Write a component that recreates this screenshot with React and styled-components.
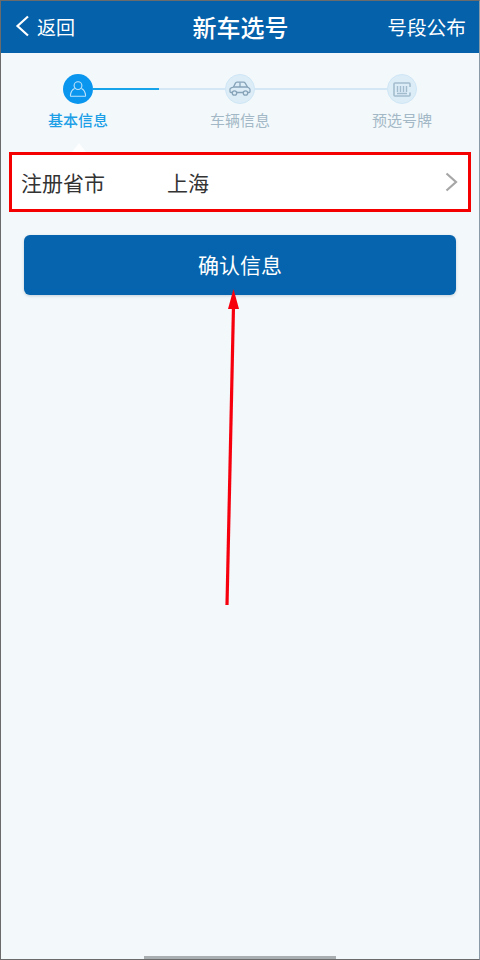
import React from "react";
import styled, { createGlobalStyle } from "styled-components";

const GlobalStyle = createGlobalStyle`
    html, body {
        margin: 0;
        padding: 0;
        background: #f3f8fb;
        font-family: "Noto Sans CJK SC", "Noto Sans", sans-serif;
    }
`;

const Screen = styled.div`
    position: relative;
    box-sizing: border-box;
    width: 480px;
    height: 960px;
    overflow: hidden;
    background: #f3f8fb;
    border-top: 1px solid #6b6b6b;
    border-left: 1px solid #6b6b6b;
    border-bottom: 1px solid #6b6b6b;
    border-right: 1px solid #8a9aa6;
`;

const Header = styled.header`
    display: flex;
    align-items: center;
    justify-content: space-between;
    height: 52px;
    padding: 0 13px 2px 14px;
    box-sizing: border-box;
    background: #0561aa;
    color: #fff;
`;

const Back = styled.div`
    display: flex;
    align-items: center;
    gap: 7px;
    width: 120px;
    font-size: 19px;
`;

const Title = styled.h1`
    margin: 0;
    font-size: 24px;
    font-weight: 500;
`;

const HeaderLink = styled.div`
    width: 120px;
    text-align: right;
    font-size: 19.7px;
    white-space: nowrap;
`;

const Steps = styled.div`
    padding-top: 21px;
`;

const Track = styled.div`
    display: flex;
    align-items: center;
    padding: 0 62px;
`;

const Dot = styled.div`
    display: flex;
    align-items: center;
    justify-content: center;
    box-sizing: border-box;
    flex: none;
    width: 30px;
    height: 30px;
    border-radius: 50%;
    background: ${({ $active }) => ($active ? "#0a96ee" : "#dcedf8")};
    border: ${({ $active }) => ($active ? "none" : "1px solid #cfe6f5")};
`;

const Line = styled.div`
    flex: 1;
    height: 2px;
    background: ${({ $half }) =>
        $half
            ? "linear-gradient(to right, #17a3ea 50%, #d3e8f4 50%)"
            : "#d3e8f4"};
`;

const Labels = styled.div`
    display: flex;
    justify-content: space-between;
    padding: 5px 47px 0;
`;

const Label = styled.div`
    width: 60px;
    text-align: center;
    white-space: nowrap;
    font-size: 15px;
    line-height: 22px;
    font-weight: ${({ $active }) => ($active ? 500 : 400)};
    color: ${({ $active }) => ($active ? "#1c9fe6" : "#a3b8c6")};
`;

const Row = styled.div`
    position: relative;
    display: flex;
    align-items: center;
    box-sizing: border-box;
    height: 60px;
    margin: 21px 8px 0;
    padding: 0 10px 0 9px;
    background: #fff;
    border: 3px solid #f50000;
    color: #333;
    font-size: 21px;

    &::before {
        content: "";
        position: absolute;
        left: 60px;
        top: -12px;
        width: 14px;
        height: 9px;
        background: rgba(255, 255, 255, 0.85);
        clip-path: polygon(50% 0, 100% 100%, 0 100%);
    }
`;

const RowLabel = styled.span`
    width: 146px;
`;

const RowValue = styled.span`
    flex: 1;
`;

const ConfirmButton = styled.button`
    display: block;
    width: 432px;
    height: 60px;
    margin: 23px 0 0 23px;
    padding: 0 0 2px;
    border: none;
    border-radius: 6px;
    background: #0564ad;
    box-shadow: 0 1px 3px rgba(90, 120, 140, 0.3);
    color: #fff;
    font-family: inherit;
    font-size: 21px;
    font-weight: 400;
`;

const Arrow = styled.svg`
    position: absolute;
    left: 215px;
    top: 285px;
`;

const HomeBar = styled.div`
    position: absolute;
    left: 143px;
    bottom: 0;
    width: 192px;
    height: 3px;
    background: #a9aeb1;
`;

const PersonIcon = () => (
    <svg width="18" height="18" viewBox="0 0 18 18" fill="none" stroke="#bfe3fb" strokeWidth="1.1">
        <circle cx="9" cy="5.6" r="3.9" />
        <path d="M5.6 8.6C3.4 9.6 1.8 11.8 1.4 15.4c-.1.6.3.9.8.9h13.6c.5 0 .9-.3.8-.9-.4-3.600-2-5.800-4.200-6.800" />
    </svg>
);

const CarIcon = () => (
    <svg width="22" height="16" viewBox="0 0 22 16" fill="none" stroke="#86a3b8" strokeWidth="1.3">
        <path d="M3.500 11.500H2c-.6 0-1-.4-1-1V8.200c0-.7.5-1.200 1.200-1.400L4.500 6l1.800-3.600C6.700 1.600 7.300 1.200 8 1.200h6.500c.7 0 1.300.4 1.700 1L18.500 6l1.500 1c.6.400 1 1 1 1.700v1.800c0 .6-.4 1-1 1h-1.500" />
        <path d="M7.500 11.500h7M4.500 6h14M11 1.500V6" />
        <circle cx="5.500" cy="12" r="2.200" />
        <circle cx="16.500" cy="12" r="2.200" />
    </svg>
);

const PlateIcon = () => (
    <svg width="18" height="15" viewBox="0 0 18 15" fill="none" stroke="#a3bccd">
        <path d="M17 10.500V13c0 .6-.4 1-1 1H2c-.6 0-1-.4-1-1V2c0-.6.4-1 1-1h14c.6 0 1 .4 1 1v3" strokeWidth="1.600" />
        <path d="M4.500 4v6M7.500 4v6M10.500 4v6M13.500 4v6M4 11.500h10" strokeWidth="1.400" />
    </svg>
);

const BackIcon = () => (
    <svg width="15" height="22" viewBox="0 0 15 22" fill="none" stroke="#fff" strokeWidth="2.200">
        <path d="M13 1.500 2.500 11 13 20.500" />
    </svg>
);

const Chevron = () => (
    <svg width="13" height="20" viewBox="0 0 13 20" fill="none" stroke="#a6a6a6" strokeWidth="2.200">
        <path d="M1.500 1.500 11 10l-9.500 8.500" />
    </svg>
);

const steps = [
    { name: "基本信息", icon: <PersonIcon />, active: true },
    { name: "车辆信息", icon: <CarIcon /> },
    { name: "预选号牌", icon: <PlateIcon /> },
];

const App = () => (
    <Screen>
        <GlobalStyle />
        <Header>
            <Back>
                <BackIcon />
                返回
            </Back>
            <Title>新车选号</Title>
            <HeaderLink>号段公布</HeaderLink>
        </Header>
        <Steps>
            <Track>
                <Dot $active>{steps[0].icon}</Dot>
                <Line $half />
                <Dot>{steps[1].icon}</Dot>
                <Line />
                <Dot>{steps[2].icon}</Dot>
            </Track>
            <Labels>
                {steps.map((s) => (
                    <Label key={s.name} $active={s.active}>
                        {s.name}
                    </Label>
                ))}
            </Labels>
        </Steps>
        <Row>
            <RowLabel>注册省市</RowLabel>
            <RowValue>上海</RowValue>
            <Chevron />
        </Row>
        <ConfirmButton>确认信息</ConfirmButton>
        <Arrow width="30" height="325" viewBox="0 0 30 325">
            <path d="M11 319 17.500 20" stroke="#f7000e" strokeWidth="3.200" fill="none" />
            <path d="M17.500 3 23 23H12Z" fill="#f7000e" />
        </Arrow>
        <HomeBar />
    </Screen>
);

export default App;
